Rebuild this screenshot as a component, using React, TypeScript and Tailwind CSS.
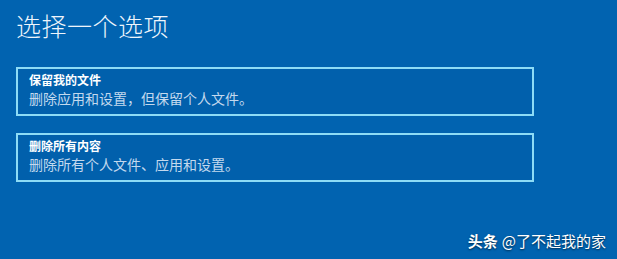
const FONT = { fontFamily: '"Noto Sans CJK SC", "Microsoft YaHei", sans-serif' };

type Option = { title: string; desc: string };

const options: Option[] = [
  { title: "保留我的文件", desc: "删除应用和设置，但保留个人文件。" },
  { title: "删除所有内容", desc: "删除所有个人文件、应用和设置。" },
];

export default function App() {
  return (
    <div className="relative w-[617px] h-[259px] overflow-hidden bg-[#0163b0]" style={FONT}>
      <div className="pl-4 pt-[7px]">
        <h1 className="text-[25px] leading-[36px] font-light text-[#eef5fc] tracking-[0.5px]">选择一个选项</h1>

        <div className="mt-[24px] flex flex-col gap-[17px]">
          {options.map((o) => (
            <div
              key={o.title}
              className="w-[518px] h-[49px] border-2 border-[#8ddcf6] bg-[#0160ac] pl-[11px] pt-[2px]"
            >
              <div className="text-[12px] leading-[18px] font-bold text-white">{o.title}</div>
              <div className="text-[14px] leading-[19px] text-[#c3d9ee]">{o.desc}</div>
            </div>
          ))}
        </div>
      </div>

      {/* watermark */}
      <div className="absolute right-[11px] bottom-[8px] flex items-center gap-[4px] text-white text-[15px] leading-[20px] [text-shadow:0_1px_2px_rgba(0,0,0,0.6)]">
        <span className="font-bold">头条</span>
        <span>@了不起我的家</span>
      </div>
    </div>
  );
}
